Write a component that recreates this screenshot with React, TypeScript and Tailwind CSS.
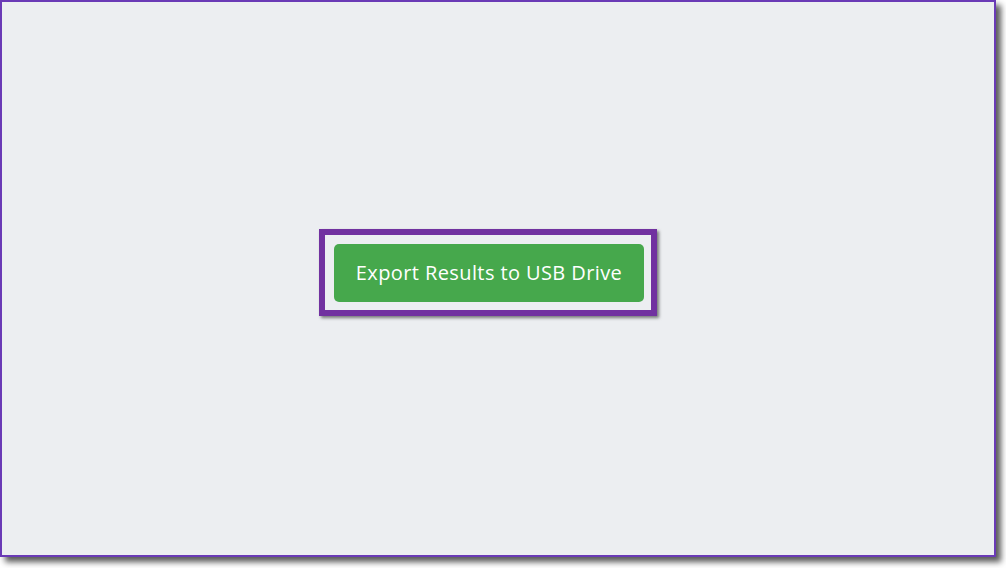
import React from "react";

const App: React.FC = () => {
  return (
    <div className="w-[1006px] h-[568px] bg-white overflow-hidden">
      <div className="w-[996px] h-[557px] border-2 border-[#6a3ab6] bg-[#eceef1] shadow-[5px_5px_6px_rgba(0,0,0,0.65)] flex items-center justify-center pr-[20px] pb-[12px]">
        <div className="border-[6px] border-[#7131a0] shadow-[2px_2px_3px_rgba(0,0,0,0.5)] pl-[9px] pr-[7px] pt-[9px] pb-[8px]">
          <button
            className="w-[310px] h-[58px] rounded-[5px] bg-[#46a84c] text-white text-[20px] tracking-[0.4px] font-['Open_Sans',sans-serif]"
          >
            Export Results to USB Drive
          </button>
        </div>
      </div>
    </div>
  );
};

export default App;
